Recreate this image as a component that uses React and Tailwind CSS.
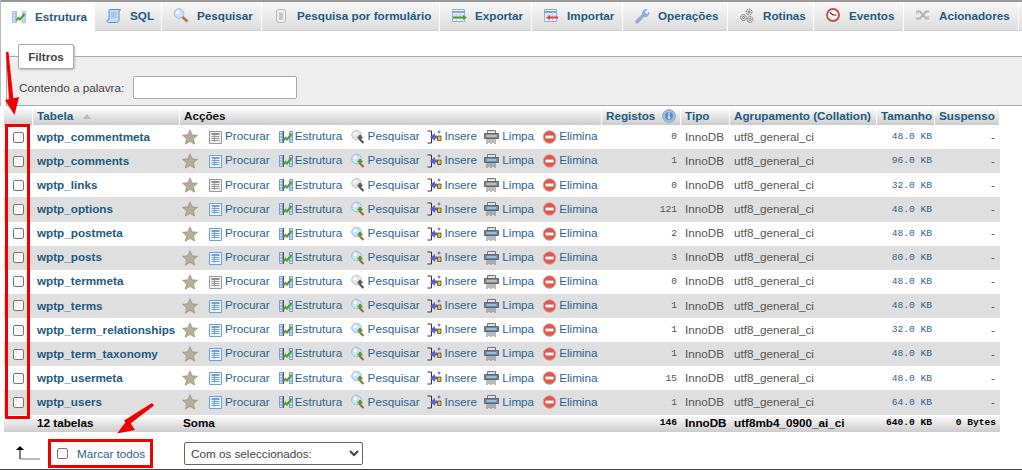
import React from 'react';

const sans = 'font-["Liberation_Sans",Arial,sans-serif]';
const mono = "font-['Liberation_Mono',monospace] text-[9.600px]";

function Ic({ size = 16, className = '', children }) {
  return (
    <svg width={size} height={size} viewBox="0 0 16 16" className={`shrink-0 ${className}`}>
      {children}
    </svg>
  );
}

// table with a green tick, used for "Estrutura"
function StructIcon({ pale }) {
  return (
    <Ic>
      <path d="M1.500 2.500h3v11h-3zM11.500 2.500h3v11h-3z" fill="#d6e4f5" stroke={pale ? '#a5c3e6' : '#6f9fd8'} />
      <path d="M1.500 5h3M1.500 8h3M1.500 11h3M11.500 5h3M11.500 8h3M11.500 11h3" stroke={pale ? '#a5c3e6' : '#6f9fd8'} />
      <path d="M5.500 2v12" stroke={pale ? '#a5c3e6' : '#555'} />
      <path d="M5.500 11.500l2-2.500 1.500 1.500 4.500-5.500" fill="none" stroke="#4f9f30" strokeWidth="2" />
    </Ic>
  );
}

function SqlIcon() {
  return (
    <Ic>
      <path d="M4 1.500h10.500l-1.500 2v8c0 2-1 3-2.500 3H2.500c-1 0-1.500-.8-1.500-1.500S1.500 11.500 3 11.500V3c0-1 .3-1.500 1-1.500z" fill="#c6dbf3" stroke="#5f8fc8" />
      <path d="M5 5h5.500M5 7h5.500M5 9h5.500" stroke="#8fb2dc" />
    </Ic>
  );
}

function SearchIcon({ gray }) {
  const leaf = gray ? '#555' : '#4c9a2a';
  return (
    <Ic>
      <circle cx="5.500" cy="6" r="4.800" fill={gray ? '#e4e4e4' : '#cfe1f7'} stroke={gray ? '#c5c5c5' : '#9dbde3'} />
      <circle cx="4" cy="4.500" r="1.600" fill="#fff" />
      <path d="M8.500 10l4 4" stroke={gray ? '#555' : '#a8662b'} strokeWidth="2.200" />
      <path d="M6.500 8.500h5M9 6v5" stroke={leaf} strokeWidth="2.200" />
    </Ic>
  );
}

function TabSearchIcon() {
  return (
    <Ic>
      <circle cx="6" cy="5.500" r="4.800" fill="#cfe1f7" stroke="#9dbde3" />
      <circle cx="4.500" cy="4" r="1.600" fill="#fff" />
      <path d="M9.500 9l5 4.500" stroke="#a8784a" strokeWidth="2.400" />
    </Ic>
  );
}

function FormSearchIcon() {
  return (
    <Ic>
      <path d="M3.500 3c0-2 9-2 9 0v10c0 2-9 2-9 0z" fill="#efefef" stroke="#b5b5b5" />
      <path d="M6 4.500h4v7.500H6z" fill="#c8c8c8" />
    </Ic>
  );
}

function TableIcon({ arrow }) {
  return (
    <Ic>
      <path d="M1.500 1.500h12v12h-12z" fill="#eaf1fa" stroke="#8fb0d8" />
      <path d="M1.500 4h12" stroke="#7ea4d2" strokeWidth="2" />
      <path d="M1.500 7h12M1.500 10h12M5.500 4v9M9.500 4v9" stroke="#bfd2ea" />
      {arrow === 'out' && <path d="M2 8.500h10v-1.500l4 2.500-4 2.500v-1.500H2z" fill="#4d9a3a" />}
      {arrow === 'in' && <path d="M15 8.500H7v-1.500l-4 2.500 4 2.500v-1.500h8z" fill="#e0454a" />}
    </Ic>
  );
}

function WrenchIcon() {
  return (
    <Ic>
      <path d="M2 12.500L8.500 6c-.5-2.500 1.500-5 4.500-4.500L10.500 4l1 2 2 .5L15 4c.5 3-2 5.500-5 4.500L4 15c-1.500 1-3-1-2-2.500z" fill="#8fb0e3" stroke="#7a9ed4" strokeWidth=".6" />
    </Ic>
  );
}

function RoutinesIcon() {
  return (
    <Ic>
      <g fill="#d5d5d5" stroke="#777" strokeWidth="1" strokeDasharray="1.500 .8">
        <circle cx="10" cy="4" r="3" />
        <circle cx="4.500" cy="9.500" r="3" />
        <circle cx="11" cy="11.500" r="3" />
      </g>
      <g fill="#fff" stroke="#666" strokeWidth=".7">
        <circle cx="10" cy="4" r="1" />
        <circle cx="4.500" cy="9.500" r="1" />
        <circle cx="11" cy="11.500" r="1" />
      </g>
    </Ic>
  );
}

function ClockIcon() {
  return (
    <Ic>
      <circle cx="8" cy="7" r="6" fill="#fff" stroke="#d8433d" strokeWidth="1.800" />
      <path d="M8 7L5 4.500M8 7h3.500" stroke="#333" strokeWidth="1.200" />
    </Ic>
  );
}

function TriggerIcon() {
  return (
    <Ic>
      <path d="M1 3.500h4l3 3.500 3-3.500h3M1 10.500h4l3-3.500 3 3.500h3" fill="none" stroke="#b5b5b5" strokeWidth="2" />
      <path d="M1 5.500h3M11 8.500h4" stroke="#ccc" />
    </Ic>
  );
}

function StarIcon() {
  return (
    <Ic>
      <path d="M8 .8l2.200 5 5.300.5-4 3.600 1.200 5.300L8 12.400l-4.700 2.800 1.200-5.300-4-3.600 5.300-.5z" fill="#b5ad94" stroke="#8f8a7a" strokeWidth=".6" />
    </Ic>
  );
}

function BrowseIcon({ gray }) {
  const line = gray ? '#999' : '#6f9fd8';
  return (
    <Ic>
      <path d="M.5 2.500h12v12H.5z" fill={gray ? '#f2f2f2' : '#eef5fd'} stroke={line} />
      <path d="M2.500 5h8" stroke={gray ? '#777' : '#5a8cc8'} strokeWidth="1.600" />
      <path d="M2.500 7.500h8M2.500 9.500h8M2.500 11.500h8M5.500 6v6.500" stroke={line} />
    </Ic>
  );
}

function InsertIcon() {
  return (
    <Ic>
      <path d="M.5 2h4v12h-4" fill="none" stroke="#333" />
      <path d="M3 8l5-4v2.500h2v3H8V12z" fill="#5d5fd0" />
      <path d="M10.500 7h3.500v4.500h-3.500z" fill="#f2c21b" stroke="#333" strokeWidth=".7" />
      <path d="M12 1.500v3M10.500 3h3" stroke="#5d5fd0" />
    </Ic>
  );
}

function EmptyIcon({ gray }) {
  const c = gray ? '#8a8a8a' : '#5c87c0';
  return (
    <Ic>
      <path d="M3.500 1.500h8v3h-8z" fill="#e4e4e4" stroke="#777" />
      <path d="M.5 4.500h14v5H.5z" fill={c} stroke="#666" />
      <path d="M2.500 7h10" stroke="#eee" />
      <path d="M3 10v5M5 10v4M7 10v5M9 10v4M11 10v5" stroke="#777" />
    </Ic>
  );
}

function DropIcon() {
  return (
    <Ic>
      <circle cx="7.500" cy="8" r="6.300" fill="#e2574c" stroke="#d9a19d" strokeWidth="1" />
      <path d="M3.500 6.600h8v2.800h-8z" fill="#fff" />
    </Ic>
  );
}

function HelpIcon() {
  return (
    <svg width="14" height="14" viewBox="0 0 14 14" className="shrink-0">
      <circle cx="7" cy="7" r="6.300" fill="#a9c0e0" stroke="#7f9fcc" />
      <circle cx="7" cy="7" r="4" fill="#5b8fd0" />
      <path d="M7 6.500v3.500" stroke="#fff" strokeWidth="1.600" />
      <path d="M7 3.800v1.500" stroke="#fff" strokeWidth="1.600" />
    </svg>
  );
}

const tabs = [
  { label: 'Estrutura', w: 'w-[94px]', icon: <StructIcon pale />, active: true },
  { label: 'SQL', w: 'w-[66px]', icon: <SqlIcon /> },
  { label: 'Pesquisar', w: 'w-[99px]', icon: <TabSearchIcon /> },
  { label: 'Pesquisa por formulário', w: 'w-[177px]', icon: <FormSearchIcon /> },
  { label: 'Exportar', w: 'w-[91px]', icon: <TableIcon arrow="out" /> },
  { label: 'Importar', w: 'w-[90px]', icon: <TableIcon arrow="in" /> },
  { label: 'Operações', w: 'w-[104px]', icon: <WrenchIcon /> },
  { label: 'Rotinas', w: 'w-[85px]', icon: <RoutinesIcon /> },
  { label: 'Eventos', w: 'w-[89px]', icon: <ClockIcon /> },
  { label: 'Acionadores', w: 'w-[114px]', icon: <TriggerIcon /> },
];

const tableRows = [
  ['wptp_commentmeta', '0', '48.0'],
  ['wptp_comments', '1', '96.0'],
  ['wptp_links', '0', '32.0'],
  ['wptp_options', '121', '48.0'],
  ['wptp_postmeta', '2', '48.0'],
  ['wptp_posts', '3', '80.0'],
  ['wptp_termmeta', '0', '48.0'],
  ['wptp_terms', '1', '48.0'],
  ['wptp_term_relationships', '1', '32.0'],
  ['wptp_term_taxonomy', '1', '48.0'],
  ['wptp_usermeta', '15', '48.0'],
  ['wptp_users', '1', '64.0'],
];

const headCell = 'h-full flex items-center bg-gradient-to-b from-white to-[#cccccc] font-bold text-[#235a81] px-[4px] whitespace-nowrap';

function Action({ icon, label, w, gap = 'gap-px' }) {
  return (
    <span className={`flex items-center ${gap} ${w}`}>
      {icon}
      <span className="text-[#2a6592] -translate-y-px">{label}</span>
    </span>
  );
}

function Row({ name, count, size, even }) {
  const empty = count === '0';
  return (
    <div className={`flex h-[24.125px] items-center ${even ? 'bg-[#dfdfdf]' : 'bg-white'}`}>
      <div className="w-[29px] flex justify-center">
        <input type="checkbox" className="w-[11px] h-[11px] appearance-none rounded-[2px] border border-[#767676] bg-white" />
      </div>
      <div className="w-[147px] pl-[4px] pb-[1.140px] font-bold text-[#235a81] whitespace-nowrap">{name}</div>
      <div className="w-[422px] flex items-center pl-[2px]">
        <span className="w-[27px]"><StarIcon /></span>
        <Action icon={<BrowseIcon gray={empty} />} label="Procurar" w="w-[69px]" gap="gap-0" />
        <Action icon={<StructIcon />} label="Estrutura" w="w-[73px]" />
        <Action icon={<SearchIcon gray={empty} />} label="Pesquisar" w="w-[77px]" />
        <Action icon={<InsertIcon />} label="Insere" w="w-[57px]" />
        <Action icon={<EmptyIcon gray={empty} />} label="Limpa" w="w-[58px]" gap="gap-[2px]" />
        <Action icon={<DropIcon />} label="Elimina" w="w-[60px]" />
      </div>
      <div className={`w-[79px] pr-[4px] pb-[1.140px] text-right translate-y-px ${mono} text-[#555]`}>{count}</div>
      <div className="w-[49px] pl-[4px] pb-[1.140px] text-[#555]">InnoDB</div>
      <div className="w-[147px] pl-[4px] pb-[1.140px] text-[#555]">utf8_general_ci</div>
      <div className={`w-[58px] pr-[3px] pb-[1.140px] text-right translate-y-px ${mono} text-[#2a6592] whitespace-nowrap`}>{size} KB</div>
      <div className="w-[64px] pr-[4px] pb-[1.140px] text-right text-[#555]">-</div>
    </div>
  );
}

export default function App() {
  return (
    <div className={`relative w-[1022px] h-[470px] overflow-hidden bg-white ${sans} text-[11.700px]`}>
      {/* Top tabs */}
      <nav className="flex h-[31px] border-t-2 border-t-[#999] bg-white">
        {tabs.map((t) => (
          <div
            key={t.label}
            className={`${t.w} shrink-0 flex items-center gap-[8px] pl-[11px] mr-px font-bold text-[#235a81] whitespace-nowrap ${
              t.active ? 'bg-white' : 'bg-gradient-to-b from-[#f8f8f8] to-[#dddddd] border-b border-b-[#ccc]'
            }`}
          >
            {t.icon}
            <span>{t.label}</span>
          </div>
        ))}
        <div className="flex-1 bg-gradient-to-b from-[#f8f8f8] to-[#dddddd] border-b border-b-[#ccc]" />
      </nav>
      <div className="absolute left-0 top-0 w-px h-[106px] bg-[#bbbbbb]" />

      {/* Filter box */}
      <div className="relative mt-[25px] ml-[6px] h-[50px] bg-[#eeeeee] border-t border-b border-l border-[#aaaaaa] pl-[12px] pt-[13px] flex items-center">
        <div className="absolute left-[11px] -top-[13px] h-[25px] w-[56px] bg-white border border-[#aaaaaa] rounded-[2px] shadow-[1px_1px_2px_#bbb] flex items-center justify-center font-bold text-[#444]">
          Filtros
        </div>
        <span className="text-[#444] mr-[9px]">Contendo a palavra:</span>
        <div className="w-[164px] h-[23px] bg-white border border-[#aaaaaa] rounded-[2px]" />
      </div>

      {/* Tables list */}
      <div className="ml-[4px] w-[996px] mt-[1px]">
        <div className="flex h-[18px] gap-px">
          <div className={`${headCell} w-[28px]`} />
          <div className={`${headCell} w-[146px]`}>
            Tabela
            <svg width="8" height="5" viewBox="0 0 8 5" className="ml-[10px]"><path d="M4 0l4 5H0z" fill="#bbb" /></svg>
          </div>
          <div className={`${headCell} w-[421px] !text-[#111]`}>Acções</div>
          <div className={`${headCell} w-[78px] justify-between`}>Registos <HelpIcon /></div>
          <div className={`${headCell} w-[48px]`}>Tipo</div>
          <div className={`${headCell} w-[146px]`}>Agrupamento (Collation)</div>
          <div className={`${headCell} w-[57px]`}>Tamanho</div>
          <div className={`${headCell} w-[64px]`}>Suspenso</div>
        </div>
        {tableRows.map((r, i) => (
          <Row key={r[0]} name={r[0]} count={r[1]} size={r[2]} even={i % 2 === 1} />
        ))}
        <div className="flex h-[17.500px] items-center bg-gradient-to-b from-white to-[#cccccc] font-bold text-black">
          <div className="w-[29px]" />
          <div className="w-[147px] pl-[4px]">12 tabelas</div>
          <div className="w-[422px] pl-[3px]">Soma</div>
          <div className={`w-[79px] pr-[4px] text-right ${mono}`}>146</div>
          <div className="w-[49px] pl-[4px]">InnoDB</div>
          <div className="w-[147px] pl-[4px]">utf8mb4_0900_ai_ci</div>
          <div className={`w-[58px] pr-[3px] text-right ${mono} whitespace-nowrap`}>640.0 KB</div>
          <div className={`w-[64px] pr-[3px] text-right ${mono} whitespace-nowrap`}>0 Bytes</div>
        </div>
      </div>

      {/* Bulk actions */}
      <div className="flex items-center mt-[7px] pl-[15px]">
        <svg width="26" height="18" viewBox="0 0 26 18" className="mr-[7px]">
          <path d="M5 4v10" fill="none" stroke="#000" strokeWidth="1" />
          <path d="M5 14h20" stroke="#777" strokeWidth="1" />
          <path d="M1 5l4-4 4 4z" fill="#000" />
        </svg>
        <div className="flex items-center w-[105px] h-[29px] border-[3px] border-[#f00000] pl-[6px] whitespace-nowrap">
          <span className="w-[11px] h-[11px] border border-[#767676] rounded-[2px] bg-white mr-[9px]" />
          <span className="text-[#2a6592]">Marcar todos</span>
        </div>
        <select className="ml-[31px] w-[179px] h-[23px] border border-[#666] rounded-[2px] bg-white text-[#444] pl-[2px]">
          <option>Com os seleccionados:</option>
        </select>
      </div>
      <div className="absolute left-0 right-0 bottom-0 h-px bg-[#444]" />

      {/* Red annotations */}
      <div className="absolute left-[5px] top-[124px] w-[25px] h-[295px] border-[3px] border-[#f00000]" />
      <svg width="1022" height="470" className="absolute inset-0 pointer-events-none">
        <path d="M6 52L8.500 52l5 48h-4.500z" fill="#f00000" />
        <path d="M5 100l14-3-4.500 18z" fill="#f00000" />
        <path d="M152 403l2 2.500-26 20-4-5z" fill="#f00000" />
        <path d="M117 433.500l18-3.500-7-11z" fill="#f00000" />
      </svg>
    </div>
  );
}
